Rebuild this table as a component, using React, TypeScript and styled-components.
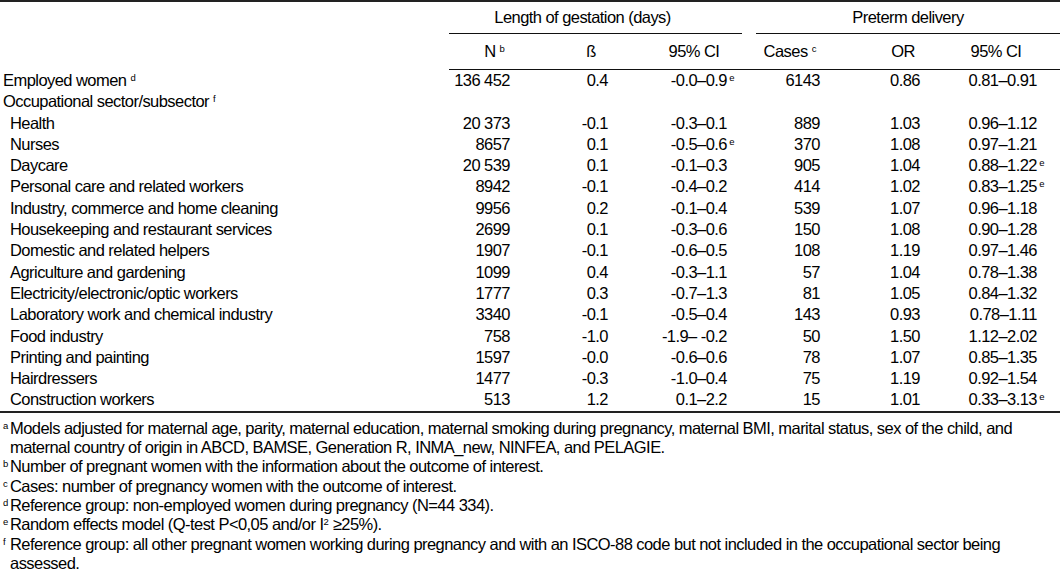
import React from 'react';
import styled, {createGlobalStyle} from 'styled-components';

type Row = {
    label: string;
    sub?: boolean;
    note?: string;
    n?: string;
    beta?: string;
    ci?: string;
    ciNote?: string;
    cases?: string;
    or?: string;
    ci2?: string;
    ci2Note?: string;
};

const rows: Row[] = [
    {label: 'Employed women', note: 'd', n: '136 452', beta: '0.4', ci: '-0.0–0.9', ciNote: 'e', cases: '6143', or: '0.86', ci2: '0.81–0.91'},
    {label: 'Occupational sector/subsector', note: 'f'},
    {label: 'Health', sub: true, n: '20 373', beta: '-0.1', ci: '-0.3–0.1', cases: '889', or: '1.03', ci2: '0.96–1.12'},
    {label: 'Nurses', sub: true, n: '8657', beta: '0.1', ci: '-0.5–0.6', ciNote: 'e', cases: '370', or: '1.08', ci2: '0.97–1.21'},
    {label: 'Daycare', sub: true, n: '20 539', beta: '0.1', ci: '-0.1–0.3', cases: '905', or: '1.04', ci2: '0.88–1.22', ci2Note: 'e'},
    {label: 'Personal care and related workers', sub: true, n: '8942', beta: '-0.1', ci: '-0.4–0.2', cases: '414', or: '1.02', ci2: '0.83–1.25', ci2Note: 'e'},
    {label: 'Industry, commerce and home cleaning', sub: true, n: '9956', beta: '0.2', ci: '-0.1–0.4', cases: '539', or: '1.07', ci2: '0.96–1.18'},
    {label: 'Housekeeping and restaurant services', sub: true, n: '2699', beta: '0.1', ci: '-0.3–0.6', cases: '150', or: '1.08', ci2: '0.90–1.28'},
    {label: 'Domestic and related helpers', sub: true, n: '1907', beta: '-0.1', ci: '-0.6–0.5', cases: '108', or: '1.19', ci2: '0.97–1.46'},
    {label: 'Agriculture and gardening', sub: true, n: '1099', beta: '0.4', ci: '-0.3–1.1', cases: '57', or: '1.04', ci2: '0.78–1.38'},
    {label: 'Electricity/electronic/optic workers', sub: true, n: '1777', beta: '0.3', ci: '-0.7–1.3', cases: '81', or: '1.05', ci2: '0.84–1.32'},
    {label: 'Laboratory work and chemical industry', sub: true, n: '3340', beta: '-0.1', ci: '-0.5–0.4', cases: '143', or: '0.93', ci2: '0.78–1.11'},
    {label: 'Food industry', sub: true, n: '758', beta: '-1.0', ci: '-1.9– -0.2', cases: '50', or: '1.50', ci2: '1.12–2.02'},
    {label: 'Printing and painting', sub: true, n: '1597', beta: '-0.0', ci: '-0.6–0.6', cases: '78', or: '1.07', ci2: '0.85–1.35'},
    {label: 'Hairdressers', sub: true, n: '1477', beta: '-0.3', ci: '-1.0–0.4', cases: '75', or: '1.19', ci2: '0.92–1.54'},
    {label: 'Construction workers', sub: true, n: '513', beta: '1.2', ci: '0.1–2.2', cases: '15', or: '1.01', ci2: '0.33–3.13', ci2Note: 'e'},
];

export default function App() {
    const notes: {mark: string; text: React.ReactNode}[] = [
        {mark: 'a', text: <>Models adjusted for maternal age, parity, maternal education, maternal smoking during pregnancy, maternal BMI, marital status, sex of the child, and<br/>maternal country of origin in ABCD, BAMSE, Generation R, INMA_new, NINFEA, and PELAGIE.</>},
        {mark: 'b', text: 'Number of pregnant women with the information about the outcome of interest.'},
        {mark: 'c', text: 'Cases: number of pregnancy women with the outcome of interest.'},
        {mark: 'd', text: 'Reference group: non-employed women during pregnancy (N=44 334).'},
        {mark: 'e', text: <>Random effects model (Q-test P&lt;0,05 and/or I<Sup>2</Sup> ≥25%).</>},
        {mark: 'f', text: <>Reference group: all other pregnant women working during pregnancy and with an ISCO-88 code but not included in the occupational sector being<br/>assessed.</>},
    ];

    return (
        <>
            <GlobalStyle/>
            <Page>
                <Table>
                    <Blank/>
                    <GroupHead $padRight={26}>Length of gestation (days)</GroupHead>
                    <Blank/>
                    <GroupHead>Preterm delivery</GroupHead>

                    <Blank/>
                    <SubHead>N <Sup>b</Sup></SubHead>
                    <SubHead>ß</SubHead>
                    <SubHead $padLeft={4}>95% CI</SubHead>
                    <SubHead/>
                    <SubHead $padRight={22}>Cases <Sup>c</Sup></SubHead>
                    <SubHead $padLeft={10}>OR</SubHead>
                    <SubHead $padRight={18}>95% CI</SubHead>

                    {rows.map((row, key) => (
                        <React.Fragment key={key}>
                            <Label $sub={row.sub}>
                                {row.label}{row.note && <> <Sup>{row.note}</Sup></>}
                            </Label>
                            <Num $pad={30}>{row.n}</Num>
                            <Num $pad={34}>{row.beta}</Num>
                            <Num $pad={15}>{row.ci}{row.ciNote && <Hang>{row.ciNote}</Hang>}</Num>
                            <Num $pad={0}/>
                            <Num $pad={26}>{row.cases}</Num>
                            <Num $pad={30}>{row.or}</Num>
                            <Num $pad={23}>{row.ci2}{row.ci2Note && <Hang>{row.ci2Note}</Hang>}</Num>
                        </React.Fragment>
                    ))}
                </Table>

                <Notes>
                    {notes.map((note) => (
                        <Note key={note.mark}>
                            <Mark>{note.mark}</Mark>
                            <NoteText>{note.text}</NoteText>
                        </Note>
                    ))}
                </Notes>
            </Page>
        </>
    );
}

const GlobalStyle = createGlobalStyle`
    html, body {
        margin: 0;
        padding: 0;
        background: #fff;
    }
    body {
        font-family: "Liberation Sans", Arial, sans-serif;
        color: #000;
    }
`;

const Page = styled.div`
    width: 1060px;
    height: 580px;
    overflow: hidden;
`;

// condensed look: bigger size, tighter tracking
const Table = styled.div`
    display: grid;
    grid-template-columns: 449px 91px 102px 100px 14px 90px 104px 110px;
    border-top: 2px solid #222;
    border-bottom: 2px solid #222;
    font-size: 16.5px;
    letter-spacing: -0.55px;
`;

const Blank = styled.div``;

const GroupHead = styled.div<{$padRight?: number}>`
    grid-column: span 3;
    height: 31px;
    line-height: 31px;
    text-align: center;
    padding-right: ${p => p.$padRight || 0}px;
    border-bottom: 1px solid #111;
`;

const SubHead = styled.div<{$padLeft?: number; $padRight?: number}>`
    height: 35px;
    line-height: 35px;
    text-align: center;
    white-space: nowrap;
    padding-left: ${p => p.$padLeft || 0}px;
    padding-right: ${p => p.$padRight || 0}px;
    border-bottom: 1px solid #111;
`;

const Label = styled.div<{$sub?: boolean}>`
    height: 21.3px;
    line-height: 21.3px;
    padding-left: ${p => p.$sub ? 10 : 3}px;
    white-space: nowrap;
`;

const Num = styled.div<{$pad: number}>`
    height: 21.3px;
    line-height: 21.3px;
    text-align: right;
    padding-right: ${p => p.$pad}px;
    white-space: nowrap;
`;

const Sup = styled.sup`
    font-size: 9.5px;
    letter-spacing: 0;
    line-height: 0;
    vertical-align: 5px;
`;

const Hang = styled(Sup)`
    display: inline-block;
    width: 10px;
    margin-right: -10px;
    text-align: center;
`;

const Notes = styled.div`
    padding: 6px 0 0 3px;
    font-size: 16.5px;
    letter-spacing: -0.55px;
    line-height: 19.3px;
`;

const Note = styled.div`
    display: flex;
`;

const Mark = styled.span`
    flex: 0 0 7px;
    font-size: 9.5px;
    letter-spacing: 0;
    line-height: 14px;
`;

const NoteText = styled.div`
    flex: 1;
`;
